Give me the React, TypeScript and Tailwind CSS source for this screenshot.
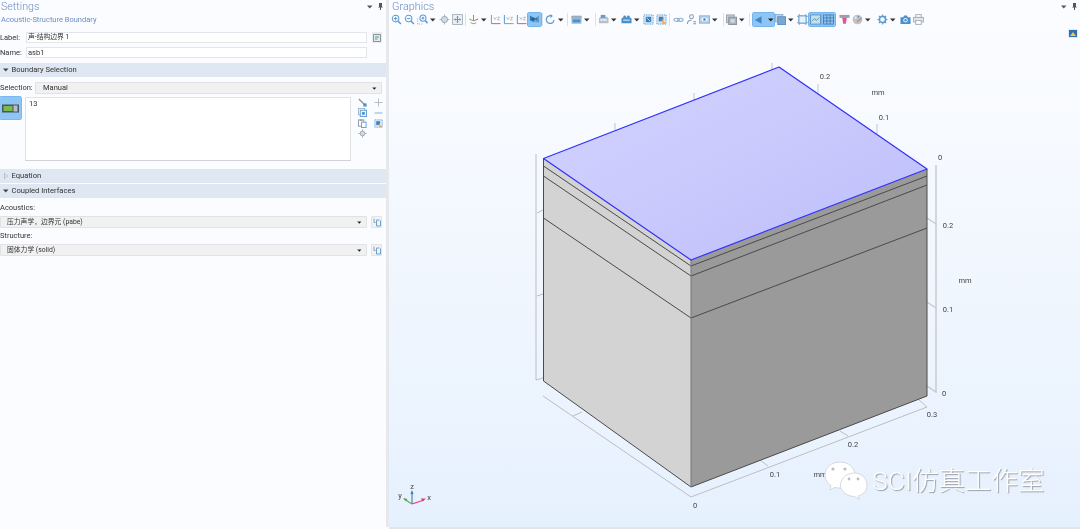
import React from "react";

const FONT = "font-['Roboto','Noto_Sans_CJK_SC',sans-serif]";

function Caret() {
  return (
    <span className="flex h-[13px] w-[9px] shrink-0 items-center justify-start pl-[1px]">
      <svg width="6" height="4" viewBox="0 0 6 4"><path d="M0 0.5h5.5L2.75 3.5z" fill="#333" /></svg>
    </span>
  );
}

function Sep({ cls = "" }: { cls?: string }) {
  return (
    <span className={`flex h-[13px] w-[3px] shrink-0 justify-center ${cls}`}>
      <span className="h-full w-px bg-[#dde0e6]" />
    </span>
  );
}

const B = "#5a9ad2";
const G = "#98a4b1";

function Glyph({ k }: { k: string }) {
  switch (k) {
    case "zin":
    case "zout":
      return (
        <g fill="none" stroke={B} strokeWidth="1.1">
          <circle cx="5" cy="5" r="3.6" />
          <path d="M7.8 7.8l3 3" strokeWidth="1.6" />
          <path d="M3 5h4" />
          {k === "zin" && <path d="M5 3v4" />}
        </g>
      );
    case "zbox":
      return (
        <g fill="none" stroke={B} strokeWidth="1.1">
          <path d="M0.7 5v6h6" stroke="#aebdcc" strokeDasharray="1.4 1" />
          <circle cx="6.5" cy="4.5" r="3.3" />
          <path d="M9 7l2.5 3" strokeWidth="1.6" />
          <path d="M5 4.5h3M6.5 3v3" />
        </g>
      );
    case "center":
      return (
        <g fill="none" stroke={G} strokeWidth="1">
          <circle cx="6" cy="6" r="3.4" fill="#d3dbe4" />
          <path d="M6 0.5v3M6 8.5v3M0.5 6h3M8.5 6h3" stroke="#9db4c9" />
        </g>
      );
    case "extents":
      return (
        <g fill="none" stroke={G} strokeWidth="0.9">
          <rect x="0.7" y="0.7" width="10.6" height="10.6" fill="#eef2f6" />
          <path d="M6 2.5v7M2.5 6h7" stroke={B} strokeWidth="1.1" />
          <path d="M4.8 3.7L6 2.5l1.2 1.2M4.8 8.3L6 9.5l1.2-1.2M3.7 4.8L2.5 6l1.2 1.2M8.3 4.8L9.5 6 8.3 7.2" stroke={B} />
        </g>
      );
    case "axes":
      return (
        <g fill="none" strokeWidth="1.1">
          <path d="M6 1v6.5" stroke={B} />
          <path d="M6 7.5L1.5 5.5" stroke="#6db85d" />
          <path d="M6 7.5l5-2" stroke="#e0578e" />
          <path d="M3 9.5c2 1.5 4 1.5 6 0" stroke="#6db85d" />
        </g>
      );
    case "xy":
    case "yz":
    case "xz":
      return (
        <g fill="none" strokeWidth="1.1">
          <path d="M1.5 1v9.5" stroke={k === "xy" ? "#6db85d" : B} />
          <path d="M1.5 10.5h10" stroke={k === "yz" ? "#6db85d" : "#e0578e"} />
          <path d="M4 3.5l1.5 2.5L7 3.5M8 3.5h2.5L8 6.5h2.5" stroke="#a3adb8" strokeWidth="0.8" />
        </g>
      );
    case "plane":
      return (
        <g>
          <path d="M1 2l5 2v5l-5-2z" fill="#2f77b5" />
          <path d="M7 4l4-2v7l-4 0z" fill="#5a9bd0" />
          <path d="M3 5.5h6" stroke="#123f66" strokeWidth="1" />
        </g>
      );
    case "rotate":
      return (
        <g fill="none" stroke={B} strokeWidth="1.3">
          <path d="M9.8 6.5a4.2 4.2 0 1 1-2.6-4.3" />
          <path d="M6 0l2.5 2.2L6 4.4z" fill={B} stroke="none" />
        </g>
      );
    case "folder":
      return (
        <g>
          <rect x="0.5" y="2" width="11" height="8.5" rx="1" fill="#8fbce2" />
          <rect x="0.5" y="2" width="11" height="2.5" fill="#a3adb8" />
          <rect x="2" y="6" width="8" height="3" fill="#4a90cc" />
        </g>
      );
    case "cloud1":
      return (
        <g>
          <path d="M1 4.5l2-1.5h7l1.5 1.5v5.5h-10.5z" fill="#b7c0ca" />
          <rect x="3" y="1" width="5" height="3" fill="#5a9ad2" />
          <rect x="2.5" y="5.5" width="7" height="2" fill="#e3e8ee" />
        </g>
      );
    case "cloud2":
      return (
        <g>
          <path d="M0.5 5l2-1.5h7l2 1.5v5h-11z" fill="#4a90cc" />
          <circle cx="4" cy="3" r="1.5" fill="#4a90cc" />
          <circle cx="8" cy="3" r="1.5" fill="#4a90cc" />
          <rect x="2.5" y="6" width="7" height="1.5" fill="#b8d6ee" />
        </g>
      );
    case "selblue":
      return (
        <g>
          <rect x="1" y="1" width="10" height="10" fill="#e2ecf6" stroke={B} strokeDasharray="1.5 1" />
          <rect x="3" y="3" width="6" height="6" fill="#3a7fbd" />
          <path d="M4 4l4 4" stroke="#e2ecf6" strokeWidth="0.8" />
        </g>
      );
    case "selbox":
      return (
        <g>
          <rect x="1" y="1" width="10" height="10" fill="#dbe6f1" stroke={B} strokeDasharray="1.5 1" />
          <rect x="3" y="3" width="5" height="5" fill="#3a7fbd" />
          <path d="M6 5l5 6H7z" fill="#efb15a" />
        </g>
      );
    case "link":
      return (
        <g fill="none" stroke="#8eb0d0" strokeWidth="1.2">
          <ellipse cx="4" cy="6.3" rx="3" ry="1.7" />
          <ellipse cx="8" cy="6.3" rx="3" ry="1.7" />
        </g>
      );
    case "people":
      return (
        <g fill="none" stroke="#7d9ab6" strokeWidth="1.1">
          <circle cx="6" cy="3" r="2.1" />
          <path d="M1.5 11c0-3 2-4.3 4.5-4.3" />
          <path d="M8 8.5h3M8 10.7h3" stroke={B} />
        </g>
      );
    case "eye":
      return (
        <g>
          <rect x="0.5" y="2" width="11" height="8" fill="#b2d0ea" stroke="#8eb0d0" />
          <ellipse cx="6" cy="6" rx="3.4" ry="2.1" fill="#f3f7fb" />
          <circle cx="6" cy="6" r="1.4" fill="#3f86c4" />
        </g>
      );
    case "cube":
      return (
        <g>
          <rect x="0.5" y="1" width="8.5" height="8.5" fill="#c5cbd2" stroke="#98a2ad" />
          <rect x="3" y="3.5" width="8.5" height="8" fill="#a9b2bc" stroke="#87919c" />
          <path d="M5 5.5h4.5v4H5z" fill="#d3d9e0" />
        </g>
      );
    case "wire":
      return (
        <g>
          <rect x="0.5" y="0.5" width="8" height="8" fill="#c2d2e2" stroke="#8eb0d0" />
          <rect x="3" y="3" width="8.5" height="8.5" fill="#7aa7d2" stroke="#5a8fc0" />
        </g>
      );
    case "frame":
      return (
        <g fill="none" stroke={B} strokeWidth="1">
          <rect x="2" y="2" width="8" height="8" fill="#eaf2f9" strokeWidth="1.2" />
          <path d="M0 2.5h2M10 2.5h2M0 9.5h2M10 9.5h2M2.5 0v2M9.5 0v2M2.5 10v2M9.5 10v2" stroke="#929da8" />
        </g>
      );
    case "graph":
      return (
        <g fill="none">
          <rect x="0.5" y="1" width="11" height="10" stroke="#5d93c4" fill="#c3dff6" />
          <path d="M2 8l3-3 2 2 3-3" stroke="#4a9a7d" />
        </g>
      );
    case "grid":
      return (
        <g fill="none" stroke="#3e79ad" strokeWidth="0.9">
          <rect x="0.5" y="1" width="11" height="10" />
          <path d="M4.2 1v10M7.8 1v10M0.5 4.3h11M0.5 7.6h11" />
        </g>
      );
    case "flask":
      return (
        <g>
          <rect x="0.5" y="1" width="11" height="3.2" fill="#96a1ac" />
          <path d="M3.5 4.2h5L7.5 10.5h-3z" fill="#e0578e" />
        </g>
      );
    case "palette":
      return (
        <g>
          <circle cx="6" cy="6" r="5.3" fill="#bcc3cb" />
          <circle cx="4" cy="4" r="1.2" fill="#eee" />
          <path d="M5 8l5-4 1 1-5 4z" fill="#cf8a5a" />
          <circle cx="7" cy="3" r="1" fill={B} />
        </g>
      );
    case "gear":
      return (
        <g>
          <circle cx="6" cy="6" r="3.4" fill="none" stroke={B} strokeWidth="1.8" />
          <path d="M6 0.5v1.5M6 10v1.5M0.5 6h1.5M10 6h1.5M2 2l1.2 1.2M8.8 8.8L10 10M2 10l1.2-1.2M8.8 3.2L10 2" stroke={B} strokeWidth="1.2" />
        </g>
      );
    case "camera":
      return (
        <g>
          <path d="M0.5 3.5h3l1-2h3l1 2h3v7.5h-11z" fill="#4a90cc" />
          <circle cx="6" cy="6.7" r="2.4" fill="#e8f1f9" />
          <circle cx="6" cy="6.7" r="1.3" fill="#4a90cc" />
        </g>
      );
    case "print":
      return (
        <g fill="none" stroke="#a0aab5" strokeWidth="1">
          <rect x="3" y="0.7" width="6" height="3" />
          <rect x="0.7" y="3.7" width="10.6" height="5" fill="#e5e9ee" />
          <rect x="3" y="7" width="6" height="4.3" fill="#fff" />
        </g>
      );
    default:
      return null;
  }
}

function Icon({ k, size = 11, cls = "" }: { k: string; size?: number; cls?: string }) {
  return (
    <svg width={size} height={size} viewBox="0 0 12 12" className={`shrink-0 ${cls}`}>
      <Glyph k={k} />
    </svg>
  );
}

function Tool({ k, cls = "", active = false }: { k: string; cls?: string; active?: boolean }) {
  return (
    <span
      className={`flex h-[13px] w-[13px] shrink-0 items-center justify-center ${
        active ? "rounded-[1px] bg-[#8ec5f4] outline outline-1 outline-[#75b5ee]" : ""
      } ${cls}`}
    >
      <Icon k={k} />
    </span>
  );
}

function Toolbar() {
  return (
    <div className="flex h-[13px] items-center pl-[1px]">
      <Tool k="zin" />
      <Tool k="zout" />
      <Tool k="zbox" />
      <Caret />
      <Tool k="center" />
      <Tool k="extents" />
      <Sep />
      <Tool k="axes" />
      <Caret />
      <Tool k="xy" />
      <Tool k="yz" />
      <Tool k="xz" />
      <Tool k="plane" active />
      <Sep />
      <Tool k="rotate" />
      <Caret />
      <Sep />
      <Tool k="folder" cls="ml-[1px]" />
      <Caret />
      <Sep cls="ml-[2px]" />
      <Tool k="cloud1" />
      <Caret />
      <Tool k="cloud2" cls="ml-[1px]" />
      <Caret />
      <Tool k="selblue" />
      <Tool k="selbox" />
      <Sep />
      <Tool k="link" cls="ml-[1px]" />
      <Tool k="people" />
      <Tool k="eye" />
      <Caret />
      <Sep cls="ml-[2px]" />
      <Tool k="cube" />
      <Caret />
      <Sep cls="ml-[1px]" />
      <span className="ml-[2px] flex h-[13px] w-[21px] shrink-0 items-center rounded-[1px] bg-[#8ec5f4] pl-[1px] outline outline-1 outline-[#75b5ee]">
        <svg width="10" height="10" viewBox="0 0 12 12" className="shrink-0"><path d="M1 6l8-4.5v9z" fill="#3f86c4" /></svg>
        <svg width="6" height="4" viewBox="0 0 6 4" className="ml-[4px] shrink-0"><path d="M0 0.5h5.5L2.75 3.5z" fill="#222" /></svg>
      </span>
      <Tool k="wire" />
      <Caret />
      <Tool k="frame" />
      <Tool k="graph" active />
      <Tool k="grid" active />
      <Tool k="flask" cls="ml-[3px]" />
      <Tool k="palette" />
      <Caret />
      <Tool k="gear" cls="ml-[3px]" />
      <Caret />
      <Tool k="camera" cls="ml-[1px]" />
      <Tool k="print" />
    </div>
  );
}

function Pins() {
  return (
    <span className="flex items-center gap-[5px]">
      <svg width="6" height="4" viewBox="0 0 6 4"><path d="M0 0.5h5.5L2.75 3.5z" fill="#555" /></svg>
      <svg width="5" height="7" viewBox="0 0 5 7"><path d="M1 0h3v3.5l1 1H3v2.5H2V4.5H0l1-1z" fill="#555" /></svg>
    </span>
  );
}

function Section({ open, title, cls = "" }: { open: boolean; title: string; cls?: string }) {
  return (
    <div className={`flex h-[14px] items-center bg-[#dee7f2] ${cls}`}>
      <span className="flex w-[11.5px] justify-center">
        {open ? (
          <svg width="6" height="4" viewBox="0 0 6 4"><path d="M0 0.5h5.5L2.75 3.5z" fill="#444" /></svg>
        ) : (
          <svg width="4" height="6" viewBox="0 0 4 6"><path d="M0.5 0.5L3.5 3 0.5 5.5z" fill="none" stroke="#a8b0ba" strokeWidth="0.7" /></svg>
        )}
      </span>
      <span className="text-[7.6px] leading-[10px] text-[#333]">{title}</span>
    </div>
  );
}

function Select({ text, cls = "", small = false }: { text: string; cls?: string; small?: boolean }) {
  return (
    <div className={`flex h-[12px] items-center justify-between rounded-[1px] border border-[#e1e2e4] bg-[#f1f1f2] pr-[4px] ${cls}`}>
      <span className={`pl-[6px] leading-[10px] text-[#333] ${small ? "text-[6.8px]" : "text-[7.5px]"}`}>{text}</span>
      <svg width="5" height="3" viewBox="0 0 6 4"><path d="M0 0.5h5.5L2.75 3.5z" fill="#222" /></svg>
    </div>
  );
}

function Arrowbtn() {
  return (
    <span className="flex h-[12px] w-[11px] shrink-0 items-center justify-center rounded-[1px] border border-[#e2e3e6] bg-[#f3f3f4]">
      <svg width="8" height="9" viewBox="0 0 8 9" fill="none">
        <path d="M1 0.5v4h1.5" stroke="#7d8893" strokeWidth="0.8" />
        <path d="M3.5 2h3M3.5 2v6h4V2.5" stroke="#5a9ad2" strokeWidth="0.9" />
      </svg>
    </span>
  );
}

function SidePanel() {
  return (
    <aside className="flex w-[386px] shrink-0 flex-col bg-[#fbfcff]">
      <div className="flex h-[13px] items-center justify-between pl-[1px] pr-[3px]">
        <span className="text-[10.7px] font-light leading-[13px] text-[#6e8dbd]">Settings</span>
        <Pins />
      </div>
      <div className="flex h-[14px] items-center pl-[1px] text-[7.5px] leading-[10px] text-[#6e8dbd]">Acoustic-Structure Boundary</div>
      <div className="mt-[5px] flex h-[11px] items-center pr-[4px]">
        <span className="w-[26px] text-[7.5px] leading-[10px] text-[#333]">Label:</span>
        <div className="flex h-full w-[341px] items-center border border-[#e3e5ea] bg-white pl-[1px] text-[6.8px] leading-[9px] text-[#333]">声-结构边界 1</div>
        <span className="ml-[5px] flex h-[11px] w-[10px] items-center justify-center bg-[#e9ecef]">
          <svg width="8" height="8" viewBox="0 0 8 8" fill="none">
            <path d="M0.5 0.5h7v7h-7z" stroke="#6f7c88" strokeWidth="0.8" />
            <path d="M2 3h4M2 5h2.5" stroke="#3aa37e" strokeWidth="1" />
          </svg>
        </span>
      </div>
      <div className="mt-[4px] flex h-[11px] items-center pr-[4px]">
        <span className="w-[26px] text-[7.5px] leading-[10px] text-[#333]">Name:</span>
        <div className="flex h-full w-[341px] items-center border border-[#e3e5ea] bg-white pl-[1px] text-[7.5px] leading-[9px] text-[#333]">asb1</div>
      </div>
      <Section open title="Boundary Selection" cls="mt-[5px]" />
      <div className="mt-[5px] flex h-[12px] items-center pr-[4px]">
        <span className="w-[35px] text-[7.5px] leading-[10px] text-[#333]">Selection:</span>
        <Select text="Manual" cls="flex-1 [&>span]:pl-[7px]" />
      </div>
      <div className="mt-[3px] flex h-[64px]">
        <span className="flex h-[22px] w-[21px] shrink-0 items-center justify-center rounded-[1px] bg-[#8ec5f4] outline outline-1 outline-[#7ab8ef]">
          <svg width="17" height="9" viewBox="0 0 17 9">
            <rect x="0" y="0.5" width="17" height="8" fill="#4a5661" />
            <rect x="1.5" y="2" width="9" height="5" fill="#7db84b" />
            <rect x="11.5" y="1.5" width="4" height="6" fill="#b7bec6" />
          </svg>
        </span>
        <div className="ml-[4px] w-[326px] border border-[#e0e2e6] border-b-[#d0d2d6] bg-white pl-[3px] pt-[1px] text-[7.5px] leading-[10px] text-[#333]">13</div>
        <div className="ml-[3px] grid h-[48px] w-[32px] grid-cols-2 content-start gap-y-[0.5px]">
          <span className="flex h-[10px] items-center justify-center">
            <svg width="9" height="9" viewBox="0 0 10 10"><path d="M1 1l7 7" stroke="#8a96a2" strokeWidth="1.6" /><rect x="6" y="6" width="3.5" height="3.5" fill="#4a90cc" /></svg>
          </span>
          <span className="flex h-[10px] items-center justify-center">
            <svg width="9" height="9" viewBox="0 0 9 9"><path d="M4.5 0.5v8M0.5 4.5h8" stroke="#a8b1bb" strokeWidth="0.8" /></svg>
          </span>
          <span className="flex h-[10px] items-center justify-center">
            <svg width="9" height="9" viewBox="0 0 10 10" fill="none"><rect x="0.5" y="0.5" width="7" height="7" stroke="#a8b1bb" /><rect x="2.5" y="2.5" width="7" height="7" stroke="#5a9ad2" fill="#eaf3fb" /><rect x="4.5" y="4.5" width="3" height="3" fill="#4a90cc" /></svg>
          </span>
          <span className="flex h-[10px] items-center justify-center">
            <svg width="9" height="2" viewBox="0 0 9 2"><path d="M0.5 1h8" stroke="#7fb2dd" strokeWidth="1" /></svg>
          </span>
          <span className="flex h-[10px] items-center justify-center">
            <svg width="9" height="9" viewBox="0 0 10 10" fill="none"><rect x="0.5" y="1" width="6" height="7" stroke="#8a96a2" /><rect x="2" y="0.5" width="3" height="1.5" fill="#8a96a2" /><rect x="4" y="3.5" width="5" height="6" stroke="#5a9ad2" fill="#fff" /></svg>
          </span>
          <span className="flex h-[10px] items-center justify-center"><Icon k="selbox" size={9} /></span>
          <span className="flex h-[10px] items-center justify-center">
            <svg width="9" height="9" viewBox="0 0 10 10" fill="none"><circle cx="5" cy="5" r="2.6" fill="#d3dbe4" stroke="#98a4b1" /><path d="M5 0.5v2M5 7.5v2M0.5 5h2M7.5 5h2" stroke="#98a4b1" /></svg>
          </span>
        </div>
      </div>
      <Section open={false} title="Equation" cls="mt-[8px]" />
      <Section open title="Coupled Interfaces" cls="mt-[1px]" />
      <div className="mt-[5px] flex h-[9px] items-center text-[7.5px] leading-[9px] text-[#333]">Acoustics:</div>
      <div className="mt-[4px] flex items-center pr-[4px]">
        <Select small text="压力声学，边界元 (pabe)" cls="w-[367px]" />
        <span className="ml-[4px]"><Arrowbtn /></span>
      </div>
      <div className="mt-[3px] flex h-[9px] items-center text-[7.5px] leading-[9px] text-[#333]">Structure:</div>
      <div className="mt-[4px] flex items-center pr-[4px]">
        <Select small text="固体力学 (solid)" cls="w-[367px]" />
        <span className="ml-[4px]"><Arrowbtn /></span>
      </div>
    </aside>
  );
}

const AXIS = "#bcbec2";

function Viewport() {
  const labels: [number, number, string][] = [
    [825, 79, "0.2"], [878, 95, "mm"], [884, 120, "0.1"], [940, 160, "0"],
    [948, 228, "0.2"], [965, 283, "mm"], [948, 312, "0.1"], [944, 396, "0"],
    [932, 417, "0.3"], [853, 447, "0.2"], [775, 477, "0.1"], [820, 477, "mm"], [695, 508, "0"],
  ];
  return (
    <svg viewBox="389 28 691 499" className="block h-full w-full">
      <defs>
        <linearGradient id="topFace" x1="0" y1="0" x2="1" y2="1">
          <stop offset="0" stopColor="#d4d4ff" />
          <stop offset="1" stopColor="#bebefb" />
        </linearGradient>
      </defs>
      <g fill="none" stroke={AXIS} strokeWidth="1">
        <path d="M536 154V380L543 378M537 213l6-3M537 296l6-2" />
        <path d="M936 165V392L927 386M927 218l9 6M927 302l9 6" strokeWidth="1.5" stroke="#c8cbd0" />
        <path d="M543 396L691 497L927 407L918 399M573 416l9-4M760 460l8 6M840 431l8 5" />
        <path d="M615 123v7M694 93v7M772 63v7M818 84v10M877 124v10" strokeWidth="1.3" stroke="#cfd1d5" />
      </g>
      <path d="M543.5 158.5L691 260V487L543.5 381Z" fill="#d3d3d3" />
      <path d="M691 260L927 169V396L691 487Z" fill="#9a9a9a" />
      <g fill="none" stroke="#4a4a4a" strokeWidth="1">
        <path d="M543.5 166L691 266L927 176" />
        <path d="M543.5 176L691 276L927 185" />
        <path d="M543.5 218L691 318L927 228" />
        <path d="M543.5 158.5V381L691 487L927 396V169" />
        <path d="M691 260V487" stroke="#777" />
      </g>
      <path d="M543.5 158.5L779 67L927 169L691 260Z" fill="url(#topFace)" stroke="#3030f8" strokeWidth="1.2" strokeLinejoin="round" />
      <g fontSize="7.5" fill="#444" textAnchor="middle" fontFamily="Roboto, sans-serif">
        {labels.map(([x, y, t]) => (
          <text key={`${x}-${y}`} x={x} y={y}>{t}</text>
        ))}
      </g>
      <g fill="none" strokeWidth="1.1">
        <path d="M412 504V492" stroke="#3d7ab8" />
        <path d="M412 504L404 499" stroke="#5cab4d" />
        <path d="M412 504L424 500" stroke="#dd3f78" />
      </g>
      <path d="M410.5 494l1.5-4 1.5 4z" fill="#3d7ab8" />
      <path d="M406 501.5l-3-3.5 4.5 1z" fill="#5cab4d" />
      <path d="M421 498.5l5 0-3.5 3z" fill="#dd3f78" />
      <g fontSize="7.5" fill="#444" textAnchor="middle" fontFamily="Roboto, sans-serif">
        <text x="412" y="489">z</text>
        <text x="400" y="498">y</text>
        <text x="429" y="500">x</text>
      </g>
      <g fill="#ffffff" stroke="#c9ccd2" strokeWidth="0.7">
        <path d="M840 462c9 0 15 6 15 13s-6 13-15 13c-2 0-3 0-5-0.6l-5 2.6 1-4.5c-4-2.5-6-6-6-10.500 0-7 6-13 15-13z" />
        <path d="M854 473c7 0 13 5 13 12s-5 10-9 11l1.500 3.500-5-3c-7 0-14-5-14-11.500 0-7 7-12 13.500-12z" />
      </g>
      <g fill="#b9bdc4">
        <circle cx="833" cy="469" r="1.6" />
        <circle cx="845" cy="469" r="1.6" />
        <circle cx="849" cy="479" r="1.4" />
        <circle cx="858" cy="479" r="1.4" />
      </g>
    </svg>
  );
}

function GraphicsPanel() {
  return (
    <main className="relative flex min-w-0 flex-1 flex-col bg-[#fbfcff]">
      <div className="flex h-[13px] items-center justify-between pl-[3px] pr-[3px]">
        <span className="text-[10.9px] font-light leading-[13px] text-[#6e8dbd]">Graphics</span>
        <Pins />
      </div>
      <Toolbar />
      <div className="h-[2px]" />
      <div className="min-h-0 flex-1 bg-gradient-to-b from-[#fbfcff] to-[#e6f1fe]">
        <Viewport />
      </div>
      <div className="h-[2px] bg-[#e2e5ea]" />
      <span className="absolute right-[2px] top-[29px] flex h-[9px] w-[10px] items-center justify-center rounded-[1px] bg-[#e3e9f2]">
        <svg width="8" height="7" viewBox="0 0 8 7"><rect width="8" height="7" fill="#2f6fb5" /><path d="M1 6l3-4 3 4z" fill="#f0c84a" /></svg>
      </span>
      <span className="absolute left-[483px] top-[465px] text-[26.5px] font-light leading-[32px] text-white [text-shadow:1px_1px_1px_#9a9da3]">
        SCI仿真工作室
      </span>
    </main>
  );
}

export default function App() {
  return (
    <div className={`flex h-[529px] w-[1080px] overflow-hidden bg-[#fbfcff] blur-[0.4px] ${FONT}`}>
      <SidePanel />
      <div className="mb-[2px] w-[3px] shrink-0 bg-[#e6e8ec]" />
      <GraphicsPanel />
    </div>
  );
}
